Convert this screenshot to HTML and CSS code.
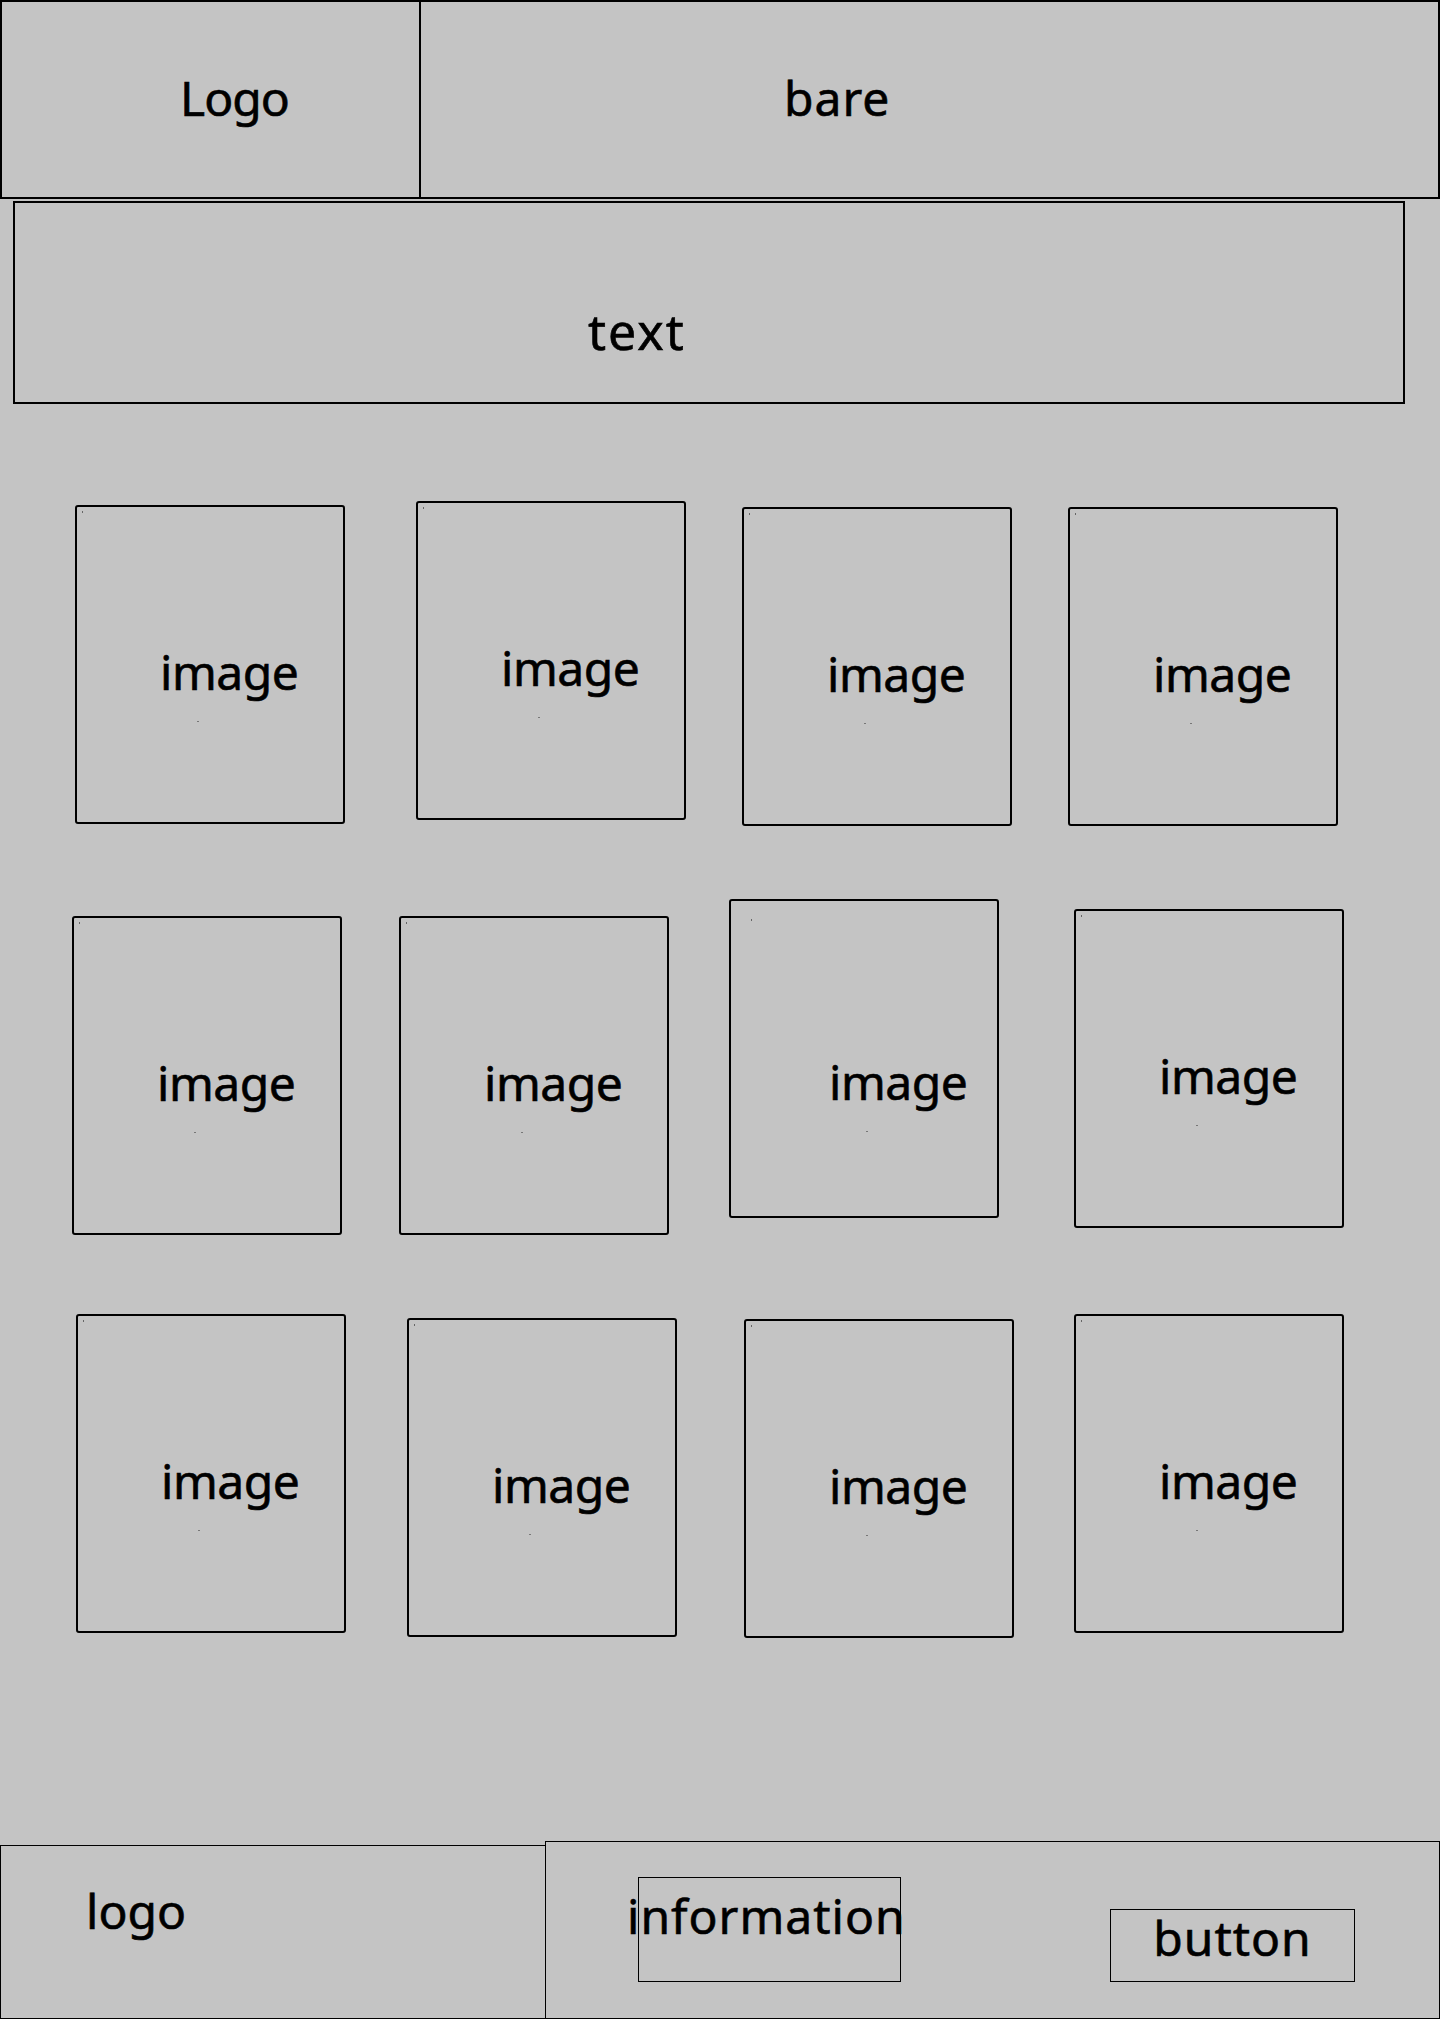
FILE: index.html
```html
<!DOCTYPE html>
<html lang="en">
<head>
<meta charset="utf-8">
<title>Wireframe</title>
<link rel="stylesheet" href="styles.css">
</head>
<body>
<div class="page">
  <header class="topbar">
    <div class="topbar-logo"><span class="label">Logo</span></div>
    <div class="topbar-nav"><span class="label">bare</span></div>
  </header>

  <section class="intro"><span class="label">text</span></section>

  <section class="gallery">
    <div class="row row-1">
      <div class="card c1"><span class="label">image</span></div>
      <div class="card c2"><span class="label">image</span></div>
      <div class="card c3"><span class="label">image</span></div>
      <div class="card c4"><span class="label">image</span></div>
    </div>
    <div class="row row-2">
      <div class="card c5"><span class="label">image</span></div>
      <div class="card c6"><span class="label">image</span></div>
      <div class="card c7 card-shifted"><span class="label">image</span></div>
      <div class="card c8"><span class="label">image</span></div>
    </div>
    <div class="row row-3">
      <div class="card c9"><span class="label">image</span></div>
      <div class="card c10"><span class="label">image</span></div>
      <div class="card c11"><span class="label">image</span></div>
      <div class="card c12"><span class="label">image</span></div>
    </div>
  </section>

  <footer class="footer">
    <div class="footer-logo"><span class="label">logo</span></div>
    <div class="footer-info">
      <div class="info-box"><span class="label">information</span></div>
      <div class="button-box"><span class="label">button</span></div>
    </div>
  </footer>
</div>
</body>
</html>
```

FILE: styles.css
```css
* { box-sizing: border-box; }

html, body {
  margin: 0;
  padding: 0;
  background: #c4c4c4;
}

body {
  font-family: "Noto Sans", "DejaVu Sans", sans-serif;
  color: #000;
  width: 1440px;
  height: 2019px;
  overflow: hidden;
}

.page {
  display: flex;
  flex-direction: column;
}

.label {
  display: block;
  font-size: 48px;
  line-height: 48px;
  white-space: nowrap;
  -webkit-text-stroke: 0.6px #000;
}

/* header */
.topbar {
  display: flex;
  height: 199px;
  border: 2px solid #000;
}

.topbar-logo {
  width: 419px;
  border-right: 2px solid #000;
  padding: 72px 0 0 178px;
}

.topbar-logo .label { letter-spacing: -1px; }

.topbar-nav {
  flex: 1;
  padding: 72px 0 0 363px;
}

.topbar-nav .label { letter-spacing: 1px; }

/* intro text box */
.intro {
  margin: 2px 0 0 13px;
  width: 1392px;
  height: 203px;
  border: 2px solid #000;
  padding: 104px 0 0 573px;
}

.intro .label {
  font-size: 50px;
  letter-spacing: 2px;
}

/* gallery */
.gallery {
  margin-top: 97px;
  display: flex;
  flex-direction: column;
}

.row {
  display: flex;
  align-items: flex-start;
}

.row-2 { margin-top: 73px; }
.row-3 { margin-top: 79px; }

.card {
  position: relative;
  flex: none;
  width: 270px;
  height: 319px;
  border: 2px solid #000;
  border-radius: 3px;
  padding: 141px 0 0 83px;
}

.card .label { letter-spacing: -0.5px; }

.card::before {
  content: "";
  position: absolute;
  left: 5px;
  top: 4px;
  width: 1px;
  height: 2px;
  background: #666;
}

.card::after {
  content: "";
  position: absolute;
  left: 120px;
  top: 214px;
  width: 2px;
  height: 1px;
  background: #777;
}

.card-shifted { padding: 157px 0 0 98px; }
.card-shifted::before { left: 20px; top: 18px; }
.card-shifted::after { left: 135px; top: 230px; }

.c1  { margin: 4px 0 0 75px; }
.c2  { margin: 0 0 0 71px; }
.c3  { margin: 6px 0 0 56px; }
.c4  { margin: 6px 0 0 56px; }

.c5  { margin: 17px 0 0 72px; }
.c6  { margin: 17px 0 0 57px; }
.c7  { margin: 0 0 0 60px; }
.c8  { margin: 10px 0 0 75px; }

.c9  { margin: 0 0 0 76px; }
.c10 { margin: 4px 0 0 61px; }
.c11 { margin: 5px 0 0 67px; }
.c12 { margin: 0 0 0 60px; }

/* footer */
.footer {
  margin-top: 203px;
  display: flex;
  align-items: flex-start;
  height: 178px;
}

.footer-logo {
  width: 545px;
  height: 174px;
  margin-top: 4px;
  border: 1px solid #000;
  border-right: none;
  padding: 41px 0 0 85px;
}

.footer-info {
  flex: 1;
  height: 178px;
  border: 1px solid #000;
  display: flex;
  align-items: flex-start;
}

.info-box {
  margin: 35px 0 0 92px;
  width: 263px;
  height: 105px;
  border: 1px solid #000;
  padding-top: 14px;
}

.info-box .label {
  margin-left: -12px;
  letter-spacing: 1px;
}

.button-box {
  margin: 67px 0 0 209px;
  width: 245px;
  height: 73px;
  border: 1px solid #000;
  padding-top: 4px;
  text-align: center;
}

.button-box .label { letter-spacing: 1px; }
```
